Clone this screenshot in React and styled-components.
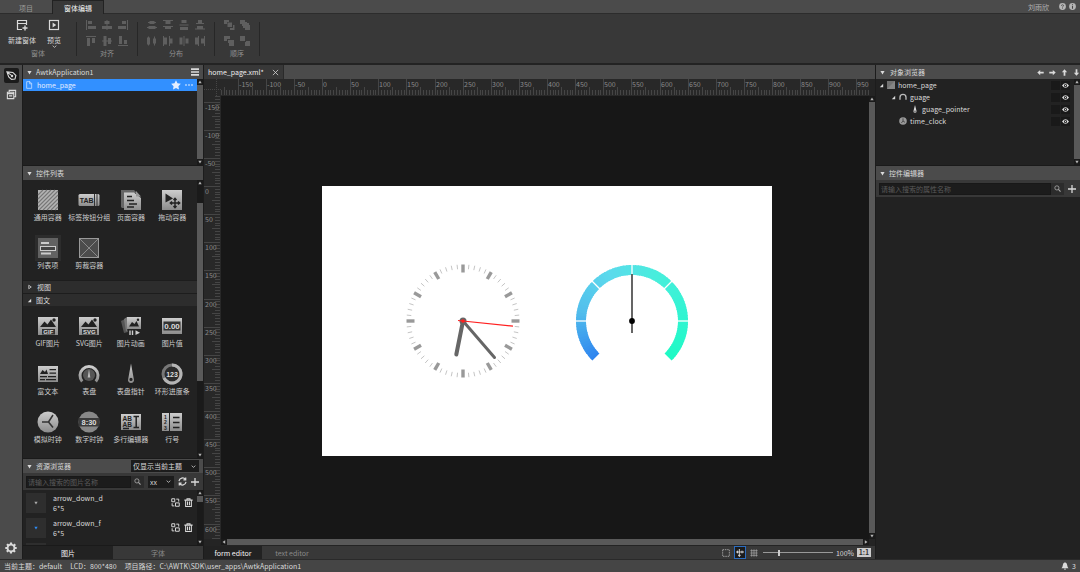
import {useState} from "react";
import styled, {createGlobalStyle} from "styled-components";

const GlobalStyle = createGlobalStyle`
  * {
    box-sizing: border-box;
  }
  body {
    margin: 0;
    background: #1c1c1c;
  }
  body, button, input, select {
    font-family: "Noto Sans CJK SC", "Noto Sans", sans-serif;
    font-size: 7px;
    line-height: 10px;
    color: #dadada;
  }
  button {
    margin: 0;
    padding: 0;
    border: 0;
    background: none;
    cursor: pointer;
  }
  svg {
    flex: none;
  }
  ul {
    margin: 0;
    padding: 0;
    list-style: none;
  }
`;

const App = styled.div`
  display: flex;
  flex-direction: column;
  height: 100vh;
  overflow: hidden;
`;
const TitleBar = styled.header`
  display: flex;
  flex: none;
  height: 14px;
  background: #4b4b4b;
  border-bottom: 1px solid #2c2c2c;
`;
const TitleTab = styled.button`
  width: 52px;
  height: 14px;
  color: ${p => p.$active ? "#f6f6f6" : "#9a9a9a"};
  background: ${p => p.$active ? "#383838" : "none"};
  border: solid ${p => p.$active ? "#222" : "transparent"};
  border-width: 1px 1px 0;
`;
const UserBox = styled.div`
  display: flex;
  align-items: center;
  gap: 3px;
  margin-left: auto;
  padding-right: 4px;
  color: #b4b4b4;
  > span {
    margin-right: 7px;
  }
`;
const Ribbon = styled.div`
  display: flex;
  flex: none;
  gap: 1px;
  height: 51px;
  padding-top: 4px;
  background: #383838;
  border-bottom: 2px solid #232323;
`;
const RibbonGroup = styled.section`
  position: relative;
  display: flex;
  flex-direction: column;
  align-items: center;
  padding: 0 6px;
  width: ${p => p.$wide ? "76px" : "auto"};
  color: #8f8f8f;
  &::after {
    content: "";
    position: absolute;
    right: -1px;
    top: 4px;
    width: 1px;
    height: 34px;
    background: #272727;
  }
`;
const RibbonButtons = styled.div`
  display: flex;
  width: 100%;
  height: 30px;
`;
const ToolButton = styled.button`
  display: flex;
  flex-direction: column;
  align-items: center;
  gap: 4px;
  width: 32px;
  padding-top: 1px;
  white-space: nowrap;
  > :nth-child(3) {
    margin-top: -5px;
  }
`;
const IconGrid = styled.div`
  display: grid;
  grid-template-columns: repeat(${p => p.$cols}, 16px);
  grid-auto-rows: 16px;
  height: 30px;
  color: #5f5f5f;
`;
const GridButton = styled.button`
  display: flex;
  align-items: center;
  justify-content: center;
  height: 14px;
  color: inherit;
`;
const Workspace = styled.main`
  display: flex;
  flex: 1;
  min-height: 0;
  gap: 1px;
`;
const Rail = styled.nav`
  display: flex;
  flex-direction: column;
  align-items: center;
  gap: 4px;
  width: 22px;
  padding: 3px 0 4px;
  background: #4b4b4b;
`;
const RailButton = styled.button`
  display: flex;
  align-items: center;
  justify-content: center;
  width: 15px;
  height: 15px;
  border-radius: 2px;
  background: ${p => p.$active ? "#1b1b1b" : "none"};
  &:last-child {
    margin-top: auto;
  }
`;
const Side = styled.aside`
  display: flex;
  flex-direction: column;
  flex: none;
  width: ${p => p.$right ? "204px" : "180px"};
  background: #222;
`;
const Header = styled.h2`
  display: flex;
  flex: none;
  align-items: center;
  gap: ${p => p.$tools ? "5px" : "4px"};
  height: 14px;
  margin: 0;
  padding: 0 ${p => p.$tools ? 0 : "4px"} 0 4px;
  font-size: 7px;
  font-weight: 400;
  background: #4b4b4b;
  > span {
    margin-right: auto;
  }
`;
const Scroller = styled.div`
  display: flex;
  flex: ${p => p.$height ? "none" : "1"};
  height: ${p => p.$height || "auto"};
  min-height: 0;
  border-bottom: 1px solid #1a1a1a;
`;
const Content = styled.div`
  flex: 1;
  min-width: 0;
  overflow: hidden;
`;
const PageRow = styled.div`
  display: flex;
  align-items: center;
  gap: 4px;
  height: 12px;
  padding: 0 4px 0 2px;
  color: #e4eeff;
  background: #3290ff;
  > span {
    margin-right: auto;
  }
`;
const Bar = styled.div`
  display: flex;
  flex: none;
  flex-direction: ${p => p.$row ? "row" : "column"};
  ${p => p.$row ? "height" : "width"}: 6px;
  background: #1a1a1a;
`;
const BarArrow = styled.button`
  display: flex;
  align-items: center;
  justify-content: center;
  width: 6px;
  height: 6px;
  color: #b5b5b5;
`;
const BarThumb = styled.div`
  flex: ${p => p.$grow} 0 0;
  background: ${p => p.$empty ? "none" : "#595959"};
`;
const WidgetGrid = styled.div`
  display: grid;
  grid-template-columns: repeat(4, 1fr);
  grid-auto-rows: 48px;
  padding: 7px 4px 0;
  height: ${p => p.$rows * 48 + 4}px;
`;
const WidgetButton = styled.button`
  display: flex;
  flex-direction: column;
  align-items: center;
  width: 100%;
  white-space: nowrap;
  color: #cdcdcd;
  > svg {
    padding: 1px;
    width: 26px;
    height: 26px;
    margin-bottom: -1px;
    background: ${p => p.$hover ? "#2c2c2c" : "none"};
  }
`;
const Category = styled.button`
  display: flex;
  align-items: center;
  gap: 4px;
  width: 100%;
  height: 13px;
  padding: 0 4px;
  background: #2d2d2d;
  border-top: 1px solid #1d1d1d;
`;
const SearchRow = styled.div`
  display: flex;
  flex: none;
  align-items: center;
  gap: 4px;
  height: 17px;
  padding: 0 4px 0 3px;
  background: #383838;
`;
const SearchBox = styled.label`
  display: flex;
  flex: 1;
  align-items: center;
  min-width: 0;
  height: 12px;
  background: #2c2c2c;
  > svg {
    margin: 0 3px;
    color: #aaa;
  }
`;
const SearchInput = styled.input`
  flex: 1;
  min-width: 0;
  height: 12px;
  padding: 0 1px;
  border: 1px solid #181818;
  background: #1c1c1c;
  &::placeholder {
    color: #5a5a5a;
    opacity: 1;
  }
`;
const IconButton = styled.button`
  display: flex;
  align-items: center;
`;
const SelectBox = styled.div`
  display: flex;
  align-items: center;
  width: ${p => p.$width};
  height: 12px;
  background: #1c1c1c;
  > svg {
    margin: 0 3px 0 -8px;
    pointer-events: none;
  }
`;
const Select = styled.select`
  appearance: none;
  flex: 1;
  min-width: 0;
  height: 12px;
  padding: 0 2px;
  border: 0;
  background: transparent;
`;
const AssetRow = styled.li`
  display: flex;
  align-items: center;
  gap: 4px;
  height: 25px;
  padding: 0 4px 0 3px;
  > p {
    flex: 1;
    margin: 0 0 0 3px;
  }
`;
const Thumb = styled.div`
  display: flex;
  align-items: center;
  justify-content: center;
  width: 20px;
  height: 20px;
  color: ${p => p.$color};
  background: #2e2e2e;
`;
const BottomTabs = styled.div`
  display: flex;
  flex: none;
  align-items: center;
  height: 13px;
  background: #383838;
`;
const BottomTab = styled.button`
  ${p => p.$width ? `width: ${p.$width};` : "flex: 1;"}
  height: 13px;
  color: ${p => p.$active ? "#f6f6f6" : "#8a8a8a"};
  background: ${p => p.$active ? "#222" : "none"};
`;
const Center = styled.section`
  display: flex;
  flex: 1;
  flex-direction: column;
  min-width: 0;
`;
const FileTabs = styled.div`
  display: flex;
  flex: none;
  height: 14px;
  background: #4b4b4b;
`;
const FileTab = styled.div`
  display: flex;
  align-items: center;
  gap: 8px;
  width: 80px;
  padding-left: 4px;
  color: #efefef;
  background: #383838;
  border-right: 1px solid #2a2a2a;
`;
const EditorGrid = styled.div`
  display: grid;
  grid-template-columns: 17px minmax(0, 1fr) 6px;
  grid-template-rows: 17px minmax(0, 1fr) 7px;
  flex: 1;
  min-height: 0;
  background: #242424;
`;
const RulerSvg = styled.svg`
  display: block;
  width: 100%;
  height: 100%;
  background: #282828;
  text {
    fill: #8a8a8a;
    font-size: 7px;
  }
  path {
    stroke: #454545;
    shape-rendering: crispEdges;
  }
`;
const Canvas = styled.div`
  display: flex;
  align-items: center;
  justify-content: center;
  overflow: hidden;
  padding: 6px 0 0 3px;
  background: #171717;
`;
const Stage = styled.svg`
  width: 450px;
  height: 270px;
  background: #fff;
`;
const ViewTools = styled.div`
  display: flex;
  align-items: center;
  gap: 3px;
  margin-left: auto;
  padding-right: 4px;
`;
const ViewButton = styled.button`
  display: flex;
  align-items: center;
  justify-content: center;
  width: ${p => p.$active ? "12px" : "10px"};
  height: 13px;
  color: ${p => p.$active ? "#ddd" : "#aaa"};
  background: ${p => p.$active ? "#1c1c1c" : "none"};
  border: ${p => p.$active ? "1px solid #2a6cc0" : 0};
`;
const Ratio = styled.button`
  width: 14px;
  height: 9px;
  line-height: 9px;
  font-weight: 700;
  color: #333;
  background: #ccc;
`;
const Zoom = styled.input`
  appearance: none;
  width: 70px;
  height: 10px;
  margin: 0 0 0 1px;
  background: linear-gradient(#999, #999) center / 100% 1px no-repeat;
  &::-webkit-slider-thumb {
    appearance: none;
    width: 2px;
    height: 6px;
    background: #ccc;
  }
`;
const TreeRow = styled.li`
  display: flex;
  align-items: center;
  gap: 3px;
  height: 12px;
  padding-left: ${p => p.$depth * 12 + 3}px;
  padding-right: 4px;
  > span {
    margin-right: auto;
  }
`;
const TreeCells = styled.div`
  display: flex;
  gap: 1px;
`;
const TreeCell = styled.button`
  display: flex;
  align-items: center;
  justify-content: center;
  width: 9px;
  height: 9px;
  background: #191919;
`;
const StatusBar = styled.footer`
  display: flex;
  flex: none;
  align-items: center;
  gap: 8px;
  height: 13px;
  padding: 0 4px;
  background: #454545;
  border-top: 1px solid #2a2a2a;
  white-space: pre;
  > :last-child {
    display: flex;
    align-items: center;
    gap: 3px;
    margin-left: auto;
  }
`;

// 12x12 line and glyph icons, drawn in the current text colour
const shapes = {
  newForm: <><path d="M6 10.5H1.5V1.5H10.5V6M1.5 4.5H10.5" fill="none" stroke="currentColor" strokeWidth="1.2"/><path d="M9 6.5V11.5M6.5 9H11.5" stroke="currentColor" strokeWidth="1.4"/></>,
  preview: <><rect x="1.5" y="1.5" width="9" height="9" fill="none" stroke="currentColor" strokeWidth="1.2"/><path d="M4.6 3.6L8.2 6L4.6 8.4Z"/></>,
  alignLeft: <path d="M1 1H2V11H1ZM3 2H7V5H3ZM3 7H11V10H3Z"/>,
  alignCenter: <path d="M5.5 1H6.5V11H5.5ZM3.5 2H8.5V5H3.5ZM1 7H11V10H1Z"/>,
  alignRight: <path d="M10 1H11V11H10ZM5 2H9V5H5ZM1 7H9V10H1Z"/>,
  alignTop: <path d="M1 1H11V2H1ZM2 3H5V11H2ZM7 3H10V8H7Z"/>,
  alignMiddle: <path d="M1 5.5H11V6.5H1ZM2.5 1H5.5V11H2.5ZM7 3H10V9H7Z"/>,
  alignBottom: <path d="M1 10H11V11H1ZM2 1H5V9H2ZM7 5H10V9H7Z"/>,
  distV1: <path d="M2 3H3.5V2H8.5V3H10V4H8.5V5H3.5V4H2ZM1 8H2.5V7H9.5V8H11V9H9.5V10H2.5V9H1Z"/>,
  distV2: <path d="M1 1H11V2H8.5V5H3.5V2H1ZM1 7H11V8H9V10H3V8H1Z"/>,
  distV3: <path d="M3.5 1H8.5V4H3.5ZM1.5 5.5H10.5V6.5H1.5ZM2 8H10V11H2Z"/>,
  distV4: <path d="M4 1H8V4H10V5H2V4H4ZM3 7H9V9.5H11V10.5H1V9.5H3Z"/>,
  distH1: <path d="M1 2.5H2V1.5H3V2.5H4V9.5H3V10.5H2V9.5H1ZM7 3.5H8V1.5H9V3.5H10V8.5H9V10.5H8V8.5H7Z"/>,
  distH2: <path d="M1 1H2V2.5H5V9.5H2V11H1ZM7 1H8V3.5H10.5V8.5H8V11H7Z"/>,
  distH3: <path d="M1.5 2.5H4.5V9.5H1.5ZM5.5 1H6.5V11H5.5ZM7.5 3.5H10.5V8.5H7.5Z"/>,
  distH4: <path d="M1 2.5H4V1H5V11H4V9.5H1ZM7 3.5H10V1H11V11H10V8.5H7Z"/>,
  order1: <path d="M1 1H6V3H4V5H1ZM4.5 3.5H9V8H4.5ZM10 6H11.5V11H7V9H10Z"/>,
  order2: <path d="M1 1H6V3H8V4H10V6H11V11H6V9H4V7H3V5H1Z"/>,
  order3: <path d="M1 1H7V4H4V6H1ZM5 5H11V11H6V8H5Z"/>,
  order4: <path d="M1 1H6V6H1ZM7 6H11V11H6V7H7Z"/>,
  pen: <path d="M1 2L7.5 2.7L10.8 6L9.8 9.8L6 10.2L3 7.5ZM1 2L6.2 6.2M7.3 6.6a.7.7 0 1 1-1.4 0a.7.7 0 0 1 1.4 0" fill="none" stroke="currentColor" strokeWidth="1.2"/>,
  forms: <path d="M3.5 3V1.5H10.5V8.5H9M1.5 3.5H8.5V10.5H1.5ZM1.5 5H8.5M3.3 7.5H6.8" fill="none" stroke="currentColor" strokeWidth="1.2"/>,
  gear: <path fillRule="evenodd" d="M5 .5H7L7.3 2L8.4 2.5L9.7 1.6L10.9 2.9L10 4.2L10.3 5H11.7V7H10.2L9.8 8L10.7 9.2L9.4 10.5L8.1 9.7L7.2 10L7 11.5H5L4.7 10L3.7 9.6L2.4 10.4L1.2 9.1L2 7.8L1.7 7H.3V5H1.8L2.2 4L1.3 2.7L2.7 1.4L3.9 2.3L4.7 2ZM6 3.5A2.5 2.5 0 1 0 6 8.5A2.5 2.5 0 1 0 6 3.5Z"/>,
  menu: <path d="M0 .5H12V3H0ZM0 4.7H12V7.2H0ZM0 9H12V11.5H0Z"/>,
  file: <path d="M2.5 1H7.5L10 3.8V11H2.5ZM7 1V4.2H10" fill="none" stroke="currentColor" strokeWidth="1"/>,
  star: <path d="M6 .3L7.8 4L11.8 4.6L8.9 7.4L9.6 11.5L6 9.6L2.4 11.5L3.1 7.4L.2 4.6L4.2 4Z"/>,
  dots: <path d="M.5 5H2.5V7H.5ZM5 5H7V7H5ZM9.5 5H11.5V7H9.5Z"/>,
  down: <path d="M1 2.5H11L6 10.5Z"/>,
  up: <path d="M1 9.5H11L6 1.5Z"/>,
  left: <path d="M9.5 1V11L1.5 6Z"/>,
  right: <path d="M2.5 1V11L10.5 6Z"/>,
  closed: <path d="M3.5 2.5V9.5L8.5 6Z" fill="none" stroke="currentColor" strokeWidth="1.5"/>,
  open: <path d="M10 2V10H2Z"/>,
  chevron: <path d="M1.5 4L6 8L10.5 4" fill="none" stroke="currentColor" strokeWidth="1.8"/>,
  search: <><circle cx="5" cy="5" r="3.6" fill="none" stroke="currentColor" strokeWidth="1.4"/><path d="M7.6 7.6L11.2 11.2" stroke="currentColor" strokeWidth="1.8"/></>,
  plus: <path d="M6 0V12M0 6H12" stroke="currentColor" strokeWidth="1.9"/>,
  refresh: <path d="M1.3 5.5A4.8 4.8 0 0 1 10 3.4M10.7 6.5A4.8 4.8 0 0 1 2 8.6M10.3 .8V3.8H7.2M1.7 11.2V8.2H4.8" fill="none" stroke="currentColor" strokeWidth="1.6"/>,
  replace: <path d="M1 1H5V5H1ZM6 6.5H11V11H6ZM7 1.5H10.3V4.8M1.5 7V10.5H4.5" fill="none" stroke="currentColor" strokeWidth="1.3"/>,
  trash: <path d="M.5 2.8H11.5M4 2.5V1H8V2.5M2.2 3V11.2H9.8V3M4.7 4.5V9.8M7.3 4.5V9.8" fill="none" stroke="currentColor" strokeWidth="1.4"/>,
  close: <path d="M1.5 1.5L10.5 10.5M10.5 1.5L1.5 10.5" stroke="currentColor" strokeWidth="1.3"/>,
  arrowLeft: <path d="M5.5 1.5V4.5H11.5V7.5H5.5V10.5L.5 6Z"/>,
  arrowRight: <path d="M6.5 1.5V4.5H.5V7.5H6.5V10.5L11.5 6Z"/>,
  arrowUp: <path d="M1.5 5.5H4.5V11.5H7.5V5.5H10.5L6 .5Z"/>,
  arrowDown: <path d="M1.5 6.5H4.5V.5H7.5V6.5H10.5L6 11.5Z"/>,
  eye: <path fillRule="evenodd" d="M0 6Q6-1.5 12 6Q6 13.5 0 6ZM6 3.3A2.7 2.7 0 1 0 6 8.7A2.7 2.7 0 1 0 6 3.3ZM6 4.8A1.2 1.2 0 1 1 6 7.2A1.2 1.2 0 1 1 6 4.8Z"/>,
  page: <><rect width="12" height="12" fill="#727272"/><path d="M0 12L12 0V12Z" fill="#858585"/></>,
  gauge: <path d="M1.5 10V6.5A4.5 4.5 0 0 1 10.5 6.5V10" fill="none" stroke="#bbb" strokeWidth="2"/>,
  pointer: <path fillRule="evenodd" d="M6 0L8.2 8.5A2.3 2.3 0 1 1 3.8 8.5ZM6 8.3A1 1 0 1 0 6 10.3A1 1 0 1 0 6 8.3Z"/>,
  clock: <><circle cx="6" cy="6" r="5.7" fill="#999"/><path d="M6 2V6L9 8M6 6L3.5 9" fill="none" stroke="#333" strokeWidth="1.1"/></>,
  help: <><circle cx="6" cy="6" r="5.8"/><path d="M4.2 4.7Q4.3 3 6 3T7.8 4.6Q7.8 5.5 6.7 6T6 7.4M6 8.2V9.6" fill="none" stroke="#444" strokeWidth="1.4"/></>,
  info: <><circle cx="6" cy="6" r="5.8"/><path d="M6 2.3V4M6 5V9.8" stroke="#444" strokeWidth="1.8"/></>,
  bell: <path d="M6 .5Q9.5 1.5 9.5 5.5Q9.5 7.5 11.3 9.3H.7Q2.5 7.5 2.5 5.5Q2.5 1.5 6 .5ZM4.5 10H7.5Q7.5 11.7 6 11.7T4.5 10Z"/>,
  dashBox: <rect x="1" y="1" width="10" height="10" fill="none" stroke="currentColor" strokeWidth="1.3" strokeDasharray="2.2 1.2"/>,
  guides: <path d="M5 0V12M0 4.5H12M2.2 2.5V6.5M9 2.5V6.5M3 9.5H7" stroke="currentColor" strokeWidth="1.4"/>,
  grid: <path d="M2.5 .5V11.5M6 .5V11.5M9.5 .5V11.5M.5 2.5H11.5M.5 6H11.5M.5 9.5H11.5" stroke="currentColor" strokeWidth="1"/>
};

function Icon({name, size = 8}) {
  return <svg width={size} height={size} viewBox="0 0 12 12" fill="currentColor" aria-hidden="true">{shapes[name]}</svg>;
}

// 24x24 widget pictures of the toolbox
const METAL = "url(#metal)";
const hills = "M4 13L8.5 7.5L11.5 10.5L15 5.5L20 13Z";

const art = {
  container: <><rect x="2" y="2" width="20" height="20" fill="#b4b4b4"/><path d="M2 7L7 2M2 11L11 2M2 15L15 2M2 19L19 2M3 22L22 3M7 22L22 7M11 22L22 11M15 22L22 15M19 22L22 19" stroke="#777" strokeWidth="1.1"/></>,
  tab: <><rect x="1.5" y="6" width="21" height="12" rx="1.5" fill={METAL}/><path d="M17.5 6V18M20 6V18" stroke="#333" strokeWidth="1"/><text x="9.6" y="14.5" fontSize="7">TAB</text></>,
  pages: <><path d="M2 2H15L17 4V5H5V20H3L2 19Z" fill="#666"/><path d="M5 4.5H15L22 10V22H5Z" fill={METAL}/><path d="M17 3L22 8.5H17Z" fill="#999"/><path d="M8 8.5H13M8 12.5H15M10 16H18M8 19H15" stroke="#222" strokeWidth="1.6"/></>,
  drag: <><rect x="2" y="2" width="20" height="20" fill={METAL}/><path d="M5.5 5.5L13 10.5L5.5 14.5Z" fill="#222"/><path d="M15 10.5V19.5M10.5 15H19.5M13.5 12L15 10.3L16.5 12M13.5 18L15 19.7L16.5 18M12 13.5L10.3 15L12 16.5M18 13.5L19.7 15L18 16.5" fill="none" stroke="#222" strokeWidth="1.4"/></>,
  listItem: <><rect x="2" y="2" width="20" height="20" fill="#626262"/><path d="M5 7H13M5 17.5H15" stroke="#ccc" strokeWidth="2.2"/><rect x="4.5" y="10.5" width="15" height="4" fill="#444" stroke="#ccc" strokeWidth="1"/></>,
  clip: <><rect x="2.5" y="2.5" width="19" height="19" fill="#4c4c4c" stroke="#999"/><path d="M3 3L21 21M21 3L3 21" stroke="#999" strokeWidth=".8"/></>,
  gif: <><rect x="2" y="3" width="20" height="18" fill={METAL}/><path d={hills} fill="#222"/><circle cx="18" cy="6" r="1.7" fill="#222"/><rect x="6" y="15" width="13" height="5.5" fill="#333"/><text x="12.3" y="20" fontSize="6" fill="#ddd">GIF</text></>,
  svg: <><rect x="2" y="3" width="20" height="18" fill={METAL}/><path d={hills} fill="#222"/><circle cx="18" cy="6" r="1.7" fill="#222"/><rect x="5" y="15" width="15" height="5.5" fill="#333"/><text x="12.3" y="20" fontSize="6" fill="#ddd">SVG</text></>,
  anim: <><path d="M2 7L6 5L9 18L5 19Z" fill="#555"/><path d="M5 5L8 3V17L7 17.5Z" fill="#777"/><rect x="8" y="3" width="14" height="12" fill={METAL}/><path d="M10 12.5L13 8L15.5 10L17.5 7L20 12.5Z" fill="#222"/><circle cx="19" cy="5.7" r="1.2" fill="#222"/><path d="M11 16.5V21M13.5 16.5V21" stroke="#ccc" strokeWidth="1.4"/><path d="M16.5 16.3L21 18.7L16.5 21Z" fill="#ccc"/></>,
  value: <><rect x="2" y="4" width="20" height="16" fill={METAL}/><rect x="3.5" y="7.5" width="17" height="9" fill="#333"/><text x="12" y="14.8" fontSize="8" fill="#ddd">0.00</text></>,
  rich: <><rect x="2" y="4" width="20" height="16" fill={METAL}/><path d="M4 12L6.5 8L9 10L10.5 7.5L12 12ZM13.5 7H20V8.3H13.5ZM13.5 10.5H20V11.8H13.5ZM4 14H11V15.3H4ZM12 14H20V15.3H12ZM4 17H9V18.3H4ZM10 17H20V18.3H10Z" fill="#222"/></>,
  dial: <><path d="M5.2 19.5A9 9 0 1 1 18.8 19.5" fill="none" stroke={METAL} strokeWidth="3"/><circle cx="12" cy="13" r="6" fill="#555"/><path d="M12 7L13.3 15.5H10.7Z" fill="#bbb"/></>,
  needle: <path fillRule="evenodd" d="M12 1.5L14.8 17A3 3 0 1 1 9.2 17ZM12 15.8A1.6 1.6 0 1 0 12 19A1.6 1.6 0 1 0 12 15.8Z" fill={METAL}/>,
  ring: <><circle cx="12" cy="12" r="9" fill="#2b2b2b" stroke="#777" strokeWidth="3"/><path d="M12 3A9 9 0 1 1 4 16" fill="none" stroke="#b5b5b5" strokeWidth="3"/><text x="12" y="14.6" fontSize="7" fill="#ddd">123</text></>,
  analog: <><circle cx="12" cy="12" r="10.5" fill={METAL}/><path d="M12.5 12L17 5M12.5 12L17 17.5M12.5 12H6" stroke="#333" strokeWidth="1.5"/></>,
  digital: <><circle cx="12" cy="12" r="10.5" fill="#888"/><rect x="1.5" y="8" width="21" height="8.5" fill="#3b3b3b"/><text x="12" y="14.9" fontSize="7.5" fill="#ddd">8:30</text></>,
  multiline: <><rect x="2" y="4" width="20" height="16" fill={METAL}/><text x="8.3" y="10.8" fontSize="6.5">AB</text><text x="8.3" y="16.5" fontSize="6.5">AB</text><path d="M14.5 6.5H20M14.5 17.5H20M17.2 6.5V17.5M4 18.5H10" stroke="#222" strokeWidth="1.5"/></>,
  lines: <><rect x="2" y="3" width="7" height="18" fill={METAL}/><rect x="10" y="3" width="12" height="18" fill={METAL}/><text x="5.5" y="9" fontSize="5">1</text><text x="5.5" y="14.4" fontSize="5">2</text><text x="5.5" y="19.6" fontSize="5">3</text><path d="M13 7.5H19.5M13 12.5H19.5M13 17.5H19.5" stroke="#222" strokeWidth="1.6"/></>
};

function Art({name}) {
  return <svg viewBox="0 0 24 24" fill="#222" fontFamily="Liberation Sans, sans-serif" fontWeight="700" textAnchor="middle" aria-hidden="true">
    {art[name]}
  </svg>;
}

const containers = [
  ["container", "通用容器"], ["tab", "标签按钮分组"], ["pages", "页面容器"], ["drag", "拖动容器"],
  ["listItem", "列表项"], ["clip", "剪裁容器"]
];
const graphics = [
  ["gif", "GIF图片"], ["svg", "SVG图片"], ["anim", "图片动画"], ["value", "图片值"],
  ["rich", "富文本"], ["dial", "表盘"], ["needle", "表盘指针"], ["ring", "环形进度条"],
  ["analog", "模拟时钟"], ["digital", "数字时钟"], ["multiline", "多行编辑器"], ["lines", "行号"]
];
const assets = [
  {name: "arrow_down_d", size: "6*5", color: "#aaa"},
  {name: "arrow_down_f", size: "6*5", color: "#2f8cf5"}
];
const tree = [
  {name: "home_page", icon: "page", depth: 0, open: true},
  {name: "guage", icon: "gauge", depth: 1, open: true},
  {name: "guage_pointer", icon: "pointer", depth: 2},
  {name: "time_clock", icon: "clock", depth: 1}
];

function ScrollBar({before = 0, size = 1, after = 0, row}) {
  return <Bar $row={row}>
    <BarArrow aria-label={row ? "left" : "up"}><Icon name={row ? "left" : "up"} size={4}/></BarArrow>
    <BarThumb $grow={before} $empty/>
    <BarThumb $grow={size}/>
    <BarThumb $grow={after} $empty/>
    <BarArrow aria-label={row ? "right" : "down"}><Icon name={row ? "right" : "down"} size={4}/></BarArrow>
  </Bar>;
}

function Widgets({items, rows}) {
  return <WidgetGrid $rows={rows}>
    {items.map(([name, label]) =>
      <WidgetButton key={name} $hover={name === "listItem"}><Art name={name}/>{label}</WidgetButton>)}
  </WidgetGrid>;
}

const SCALE = 0.5625;

// Zero of the ruler is the left or top edge of the stage, which is centred in the canvas
function Ruler({vertical}) {
  const ticks = [];
  for (let v = -180; v <= 1800; v += 5) {
    const p = Math.round(v * SCALE) + 0.5;
    const from = v % 50 === 0 ? 0 : v % 25 === 0 ? 8 : 11;
    ticks.push(vertical ? `M${from} ${p}H16` : `M${p} ${from}V16`);
  }
  const labels = [];
  for (let v = -150; v <= (vertical ? 600 : 950); v += 50) labels.push(v);
  return <RulerSvg>
    <svg x={vertical ? 0 : "50%"} y={vertical ? "50%" : 0} overflow="visible">
      <g transform={vertical ? "translate(0 -132)" : "translate(-223 0)"}>
        <path d={ticks.join("")}/>
        {labels.map(v => {
          const p = Math.round(v * SCALE);
          return <text key={v} x={vertical ? 1 : p + 1} y={vertical ? p + 8 : 8}>{v}</text>;
        })}
      </g>
    </svg>
  </RulerSvg>;
}

const stops = [[47, 134, 239], [82, 190, 236], [92, 218, 236], [72, 238, 220], [50, 244, 210], [30, 250, 196]];

function mix(t) {
  const at = Math.min(t * 5, 4.999);
  const i = Math.floor(at);
  return "rgb(" + stops[i].map((c, k) => Math.round(c + (stops[i + 1][k] - c) * (at - i))).join(",") + ")";
}

function polar(r, deg) {
  const a = deg * Math.PI / 180;
  return `${(r * Math.cos(a)).toFixed(2)} ${(r * Math.sin(a)).toFixed(2)}`;
}

function Gauge() {
  const parts = [];
  for (let a = 135; a < 405; a += 3) {
    const end = Math.min(a + 4, 405);
    parts.push(<path key={a} d={`M${polar(51, a)}A51 51 0 0 1 ${polar(51, end)}`} stroke={mix((a - 135) / 270)}/>);
  }
  return <g transform="translate(310 135)">
    <g fill="none" strokeWidth="10">{parts}</g>
    {[180, 225, 270, 315, 360].map(a =>
      <path key={a} d={`M${polar(45, a)}L${polar(57, a)}`} stroke="#fff" strokeWidth="1.3"/>)}
    <path d="M0-47V12" stroke="#555" strokeWidth="1.8"/>
    <circle r="2.9"/>
  </g>;
}

function Clock() {
  const marks = [];
  for (let i = 0; i < 60; i++) {
    const big = i % 5 === 0;
    marks.push(<path key={i} d={`M${polar(big ? 48.5 : 52, i * 6)}L${polar(56.5, i * 6)}`}
                     stroke={big ? "#999" : "#b5b5b5"} strokeWidth={big ? 3.4 : 0.8}/>);
  }
  return <g transform="translate(141 135)">
    {marks}
    <g stroke="#666" strokeLinecap="round">
      <path d="M0 0L-6.7 33.5" strokeWidth="4"/>
      <path d="M0 0L31.5 36.5" strokeWidth="3"/>
    </g>
    <circle r="3.5" fill="#666"/>
    <path d="M-5 -.5L50 5.2" stroke="#ff2020" strokeWidth="1.2"/>
    <circle r="1.8" fill="#ff2020"/>
  </g>;
}

function ToolGroup({label, cols, icons}) {
  return <RibbonGroup>
    <IconGrid $cols={cols}>
      {icons.map(name => <GridButton key={name} aria-label={name}><Icon name={name} size={12}/></GridButton>)}
    </IconGrid>
    {label}
  </RibbonGroup>;
}

export default function Designer() {
  const [zoom, setZoom] = useState(22);
  return <App>
    <GlobalStyle/>
    <svg width="0" height="0" aria-hidden="true">
      <linearGradient id="metal" x2="0" y2="1">
        <stop stopColor="#cdcdcd"/>
        <stop offset="1" stopColor="#8c8c8c"/>
      </linearGradient>
    </svg>
    <TitleBar>
      <TitleTab>项目</TitleTab>
      <TitleTab $active>窗体编辑</TitleTab>
      <UserBox><span>刘雨欣</span><Icon name="help" size={7}/><Icon name="info" size={7}/></UserBox>
    </TitleBar>
    <Ribbon>
      <RibbonGroup $wide>
        <RibbonButtons>
          <ToolButton><Icon name="newForm" size={12}/><span>新建窗体</span></ToolButton>
          <ToolButton><Icon name="preview" size={12}/><span>预览</span><Icon name="chevron" size={5}/></ToolButton>
        </RibbonButtons>
        窗体
      </RibbonGroup>
      <ToolGroup label="对齐" cols={3} icons={["alignLeft", "alignCenter", "alignRight", "alignTop", "alignMiddle", "alignBottom"]}/>
      <ToolGroup label="分布" cols={4} icons={["distV1", "distV2", "distV3", "distV4", "distH1", "distH2", "distH3", "distH4"]}/>
      <ToolGroup label="顺序" cols={2} icons={["order1", "order2", "order3", "order4"]}/>
    </Ribbon>
    <Workspace>
      <Rail>
        <RailButton $active aria-label="design"><Icon name="pen" size={11}/></RailButton>
        <RailButton aria-label="forms"><Icon name="forms" size={11}/></RailButton>
        <RailButton aria-label="settings"><Icon name="gear" size={12}/></RailButton>
      </Rail>
      <Side>
        <Header><Icon name="down" size={5}/><span>AwtkApplication1</span><Icon name="menu"/></Header>
        <Scroller $height="87px">
          <Content>
            <PageRow><Icon name="file"/><span>home_page</span><Icon name="star" size={10}/><Icon name="dots"/></PageRow>
          </Content>
          <ScrollBar/>
        </Scroller>
        <Header><Icon name="down" size={5}/><span>控件列表</span></Header>
        <Scroller>
          <Content>
            <Widgets items={containers} rows={2}/>
            <Category><Icon name="closed" size={6}/>视图</Category>
            <Category><Icon name="open" size={5}/>图文</Category>
            <Widgets items={graphics} rows={3}/>
          </Content>
          <ScrollBar before={17} size={177} after={71}/>
        </Scroller>
        <Header>
          <Icon name="down" size={5}/><span>资源浏览器</span>
          <SelectBox $width="68px">
            <Select aria-label="主题"><option>仅显示当前主题</option></Select>
            <Icon name="chevron" size={5}/>
          </SelectBox>
        </Header>
        <SearchRow>
          <SearchBox>
            <SearchInput placeholder="请输入搜索的图片名称"/>
            <Icon name="search" size={7}/>
          </SearchBox>
          <SelectBox $width="26px">
            <Select aria-label="分辨率"><option>xx</option></Select>
            <Icon name="chevron" size={5}/>
          </SelectBox>
          <IconButton aria-label="刷新"><Icon name="refresh" size={9}/></IconButton>
          <IconButton aria-label="添加"><Icon name="plus"/></IconButton>
        </SearchRow>
        <Scroller $height="56px">
          <Content as="ul">
            {assets.map(a => <AssetRow key={a.name}>
              <Thumb $color={a.color}><Icon name="down" size={4}/></Thumb>
              <p>{a.name}<br/>{a.size}</p>
              <IconButton aria-label="替换"><Icon name="replace" size={9}/></IconButton>
              <IconButton aria-label="删除"><Icon name="trash" size={9}/></IconButton>
            </AssetRow>)}
            <AssetRow><Thumb/></AssetRow>
          </Content>
          <ScrollBar size={6} after={38}/>
        </Scroller>
        <BottomTabs>
          <BottomTab $active>图片</BottomTab>
          <BottomTab>字体</BottomTab>
        </BottomTabs>
      </Side>
      <Center>
        <FileTabs>
          <FileTab>home_page.xml*<IconButton aria-label="关闭"><Icon name="close" size={7}/></IconButton></FileTab>
        </FileTabs>
        <EditorGrid>
          <RulerSvg><path d="M12.5 0V17M0 10.5H17" strokeDasharray="1 1"/></RulerSvg>
          <Ruler/>
          <span/>
          <Ruler vertical/>
          <Canvas>
            <Stage viewBox="0 0 450 270">
              <Clock/>
              <Gauge/>
            </Stage>
          </Canvas>
          <ScrollBar/>
          <span/>
          <ScrollBar row/>
          <span/>
        </EditorGrid>
        <BottomTabs>
          <BottomTab $active $width="58px">form editor</BottomTab>
          <BottomTab $width="60px">text editor</BottomTab>
          <ViewTools>
            <ViewButton aria-label="边框"><Icon name="dashBox"/></ViewButton>
            <ViewButton $active aria-label="参考线"><Icon name="guides"/></ViewButton>
            <ViewButton aria-label="网格"><Icon name="grid"/></ViewButton>
            <Zoom type="range" aria-label="缩放" value={zoom} onChange={e => setZoom(e.target.value)}/>
            <span>100%</span>
            <Ratio>1:1</Ratio>
          </ViewTools>
        </BottomTabs>
      </Center>
      <Side $right>
        <Header $tools>
          <Icon name="down" size={5}/><span>对象浏览器</span>
          <Icon name="arrowLeft" size={7}/><Icon name="arrowRight" size={7}/><Icon name="arrowUp" size={7}/><Icon name="arrowDown" size={7}/>
        </Header>
        <Scroller $height="87px">
          <Content as="ul">
            {tree.map(n => <TreeRow key={n.name} $depth={n.depth}>
              {n.open ? <Icon name="open" size={5}/> : <svg width="5" height="5"/>}
              <Icon name={n.icon}/>
              <span>{n.name}</span>
              <TreeCells>
                <TreeCell aria-label="锁定"/>
                <TreeCell aria-label="显示"><Icon name="eye" size={7}/></TreeCell>
              </TreeCells>
            </TreeRow>)}
          </Content>
          <ScrollBar/>
        </Scroller>
        <Header><Icon name="down" size={5}/><span>控件编辑器</span></Header>
        <SearchRow>
          <SearchBox>
            <SearchInput placeholder="请输入搜索的属性名称"/>
            <Icon name="search" size={7}/>
          </SearchBox>
          <IconButton aria-label="添加"><Icon name="plus"/></IconButton>
        </SearchRow>
      </Side>
    </Workspace>
    <StatusBar>
      <span>当前主题：default</span>
      <span>LCD：800*480</span>
      <span>项目路径：C:\AWTK\SDK\user_apps\AwtkApplication1</span>
      <span><Icon name="bell"/>3</span>
    </StatusBar>
  </App>;
}
